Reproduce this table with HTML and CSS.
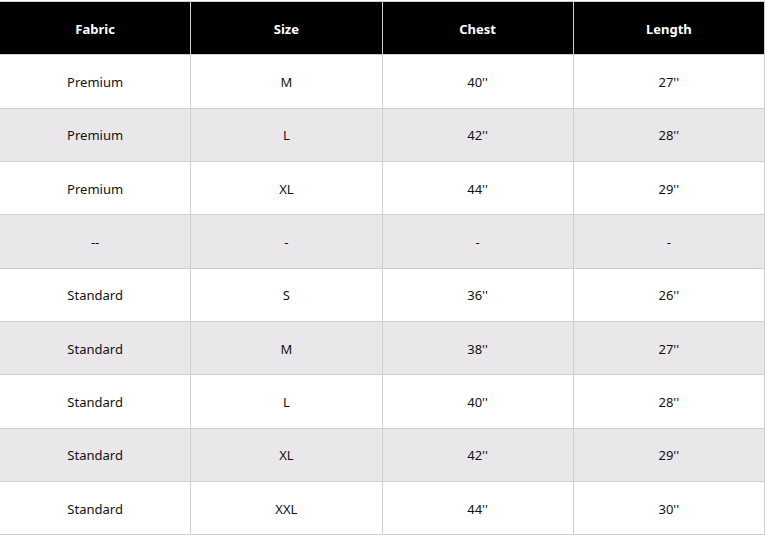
FILE: index.html
```html
<!DOCTYPE html>
<html>
<head>
<meta charset="utf-8">
<link rel="stylesheet" href="styles.css">
</head>
<body>
<table class="size-table">
  <thead>
    <tr><th>Fabric</th><th>Size</th><th>Chest</th><th>Length</th></tr>
  </thead>
  <tbody>
    <tr><td>Premium</td><td>M</td><td>40''</td><td>27''</td></tr>
    <tr><td>Premium</td><td>L</td><td>42''</td><td>28''</td></tr>
    <tr><td>Premium</td><td>XL</td><td>44''</td><td>29''</td></tr>
    <tr><td>--</td><td>-</td><td>-</td><td>-</td></tr>
    <tr><td>Standard</td><td>S</td><td>36''</td><td>26''</td></tr>
    <tr><td>Standard</td><td>M</td><td>38''</td><td>27''</td></tr>
    <tr><td>Standard</td><td>L</td><td>40''</td><td>28''</td></tr>
    <tr><td>Standard</td><td>XL</td><td>42''</td><td>29''</td></tr>
    <tr><td>Standard</td><td>XXL</td><td>44''</td><td>30''</td></tr>
  </tbody>
</table>
</body>
</html>
```
FILE: styles.css
```css
html, body {
  margin: 0;
  padding: 0;
  background: #ffffff;
}
body {
  padding-top: 1px;
  font-family: "Noto Sans", "Open Sans", sans-serif;
  font-size: 13px;
  color: #111;
}
.size-table {
  width: 766px;
  margin-left: -1px;
  border-collapse: collapse;
  table-layout: fixed;
}
.size-table th,
.size-table td {
  border: 1px solid #cfcfcf;
  text-align: center;
  vertical-align: middle;
  padding: 1px 0 0;
  height: 51.33px;
}
.size-table th {
  background: #000;
  color: #fff;
  font-weight: 700;
}
.size-table tbody tr:nth-child(even) td {
  background: #e9e7ea;
}
```
